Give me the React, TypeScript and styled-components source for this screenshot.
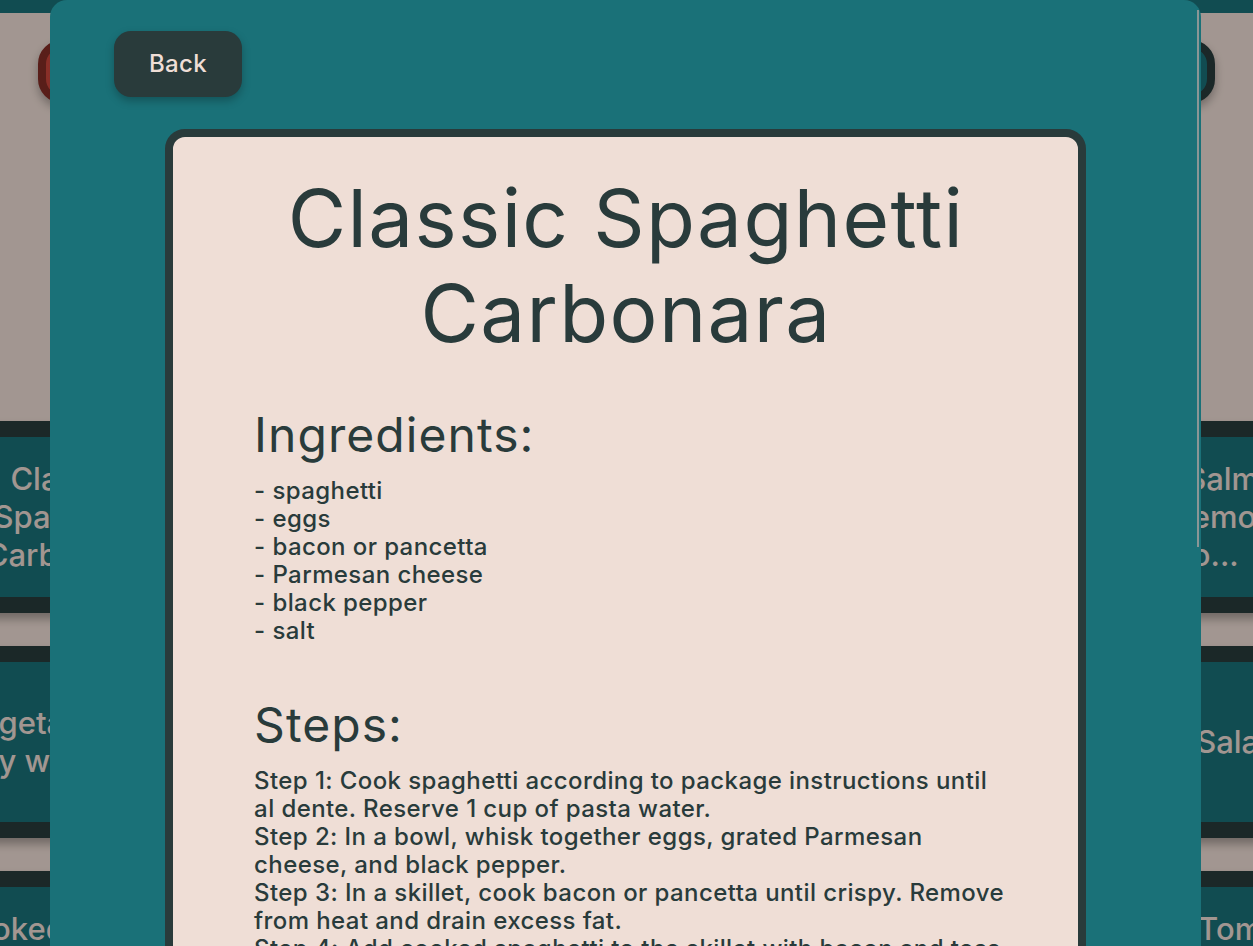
import React from "react";
import styled, { createGlobalStyle } from "styled-components";

const TEAL = "#1a7178";
const DARK = "#293b3b";
const CREAM = "#efded6";
const RED = "#cb463b";
const RED_DARK = "#842d26";

const Global = createGlobalStyle`
  * { box-sizing: border-box; }
  html, body {
    margin: 0;
    padding: 0;
    height: 100%;
    overflow: hidden;
  }
  body {
    background: ${CREAM};
    font-family: Inter, Roboto, "Liberation Sans", Arial, sans-serif;
  }
`;

/* ---------- background page ---------- */

const Page = styled.div`
  min-height: 100vh;
  background: ${CREAM};
`;

const TopStripe = styled.div`
  height: 13px;
  background: ${TEAL};
`;

const Nav = styled.nav`
  display: flex;
  justify-content: space-between;
  padding: 27px 38px 0;
`;

const NavButton = styled.button<{ $variant: "red" | "dark" }>`
  width: 130px;
  height: 63px;
  border-radius: 24px;
  border: 8px solid ${(p) => (p.$variant === "red" ? RED_DARK : DARK)};
  background: ${(p) => (p.$variant === "red" ? RED : TEAL)};
  box-shadow: 0 5px 10px rgba(0, 0, 0, 0.3);
`;

const RecipeGrid = styled.div`
  display: grid;
  grid-template-columns: 260px 1fr 260px;
  gap: 33px;
  margin: 318px -66px 0;
`;

const RecipeCard = styled.div`
  height: 192px;
  border: 16px solid ${DARK};
  border-radius: 18px;
  background: ${TEAL};
  box-shadow: 0 6px 10px rgba(0, 0, 0, 0.3);
  display: flex;
  flex-direction: column;
  align-items: center;
  justify-content: center;
  color: ${CREAM};
  font-size: 31px;
  font-weight: 500;
  line-height: 38px;
`;

const CardLine = styled.span`
  white-space: nowrap;
`;

const recipes: string[][] = [
  ["Classic", "Spaghetti", "Carbonara"],
  ["Chicken", "Tikka Masala"],
  ["Grilled Salmon", "with Lemon", "Orzo..."],
  ["Vegetable Stir", "Fry with Rice"],
  ["Beef Tacos"],
  ["Greek Salad"],
  ["Smoked Salmon", "Bagel with", "Cream Cheese"],
  ["Mushroom", "Risotto"],
  ["Roasted Tomato", "Basil Soup", "with Croutons"],
];

/* ---------- modal ---------- */

const Overlay = styled.div`
  position: fixed;
  inset: 0;
  background: rgba(0, 0, 0, 0.32);
  display: flex;
  justify-content: flex-start;
  padding-left: 50px;
`;

const ModalFrame = styled.div`
  position: relative;
  width: 1151px;
  height: 100%;
`;

const Modal = styled.div`
  height: 100%;
  overflow-y: auto;
  scrollbar-width: none;
  background: ${TEAL};
  border-radius: 17px 17px 0 0;
  padding: 31px 0 40px;
`;

const ScrollThumb = styled.div`
  position: absolute;
  top: 10px;
  right: 2px;
  width: 2px;
  height: 537px;
  background: #8a9696;
`;

const BackButton = styled.button`
  display: block;
  margin-left: 64px;
  padding: 19px 35px;
  border: none;
  border-radius: 17px;
  background: ${DARK};
  color: ${CREAM};
  font-family: inherit;
  font-size: 24px;
  font-weight: 500;
  line-height: 28px;
  letter-spacing: 0.015em;
  box-shadow: 0 4px 9px rgba(0, 0, 0, 0.25);
  cursor: pointer;
`;

const RecipeSheet = styled.article`
  width: 80%;
  margin: 32px auto 0;
  border: 8px solid ${DARK};
  border-radius: 20px;
  background: ${CREAM};
  color: ${DARK};
  padding: 33px 70px 440px 81px;
`;

const Title = styled.h1`
  margin: 0 10px 0 0;
  font-size: 80px;
  font-weight: 400;
  line-height: 95px;
  letter-spacing: 0.017em;
  text-align: center;
`;

const SectionTitle = styled.h2<{ $gap: number }>`
  margin: ${(p) => p.$gap}px 0 14px;
  font-size: 48px;
  font-weight: 400;
  line-height: 56px;
  letter-spacing: 0.022em;
`;

const TextBlock = styled.div`
  font-size: 24px;
  font-weight: 500;
  line-height: 28px;
  letter-spacing: 0.017em;
`;

const Line = styled.div``;

const ingredients = [
  "spaghetti",
  "eggs",
  "bacon or pancetta",
  "Parmesan cheese",
  "black pepper",
  "salt",
];

const steps = [
  "Cook spaghetti according to package instructions until al dente. Reserve 1 cup of pasta water.",
  "In a bowl, whisk together eggs, grated Parmesan cheese, and black pepper.",
  "In a skillet, cook bacon or pancetta until crispy. Remove from heat and drain excess fat.",
  "Add cooked spaghetti to the skillet with bacon and toss to combine. Remove from heat.",
  "Quickly pour in the egg mixture, tossing continuously to create a creamy sauce. Add pasta water as needed.",
  "Season with salt and serve immediately with extra Parmesan cheese.",
];

export default function App() {
  return (
    <>
      <Global />
      <Page>
        <TopStripe />
        <Nav>
          <NavButton $variant="red" aria-label="Add recipe" />
          <NavButton $variant="dark" aria-label="Menu" />
        </Nav>
        <RecipeGrid>
          {recipes.map((lines, i) => (
            <RecipeCard key={i}>
              {lines.map((l) => (
                <CardLine key={l}>{l}</CardLine>
              ))}
            </RecipeCard>
          ))}
        </RecipeGrid>
      </Page>
      <Overlay>
        <ModalFrame>
          <Modal>
            <BackButton>Back</BackButton>
            <RecipeSheet>
              <Title>Classic Spaghetti Carbonara</Title>
              <SectionTitle $gap={47}>Ingredients:</SectionTitle>
              <TextBlock>
                {ingredients.map((ing) => (
                  <Line key={ing}>- {ing}</Line>
                ))}
              </TextBlock>
              <SectionTitle $gap={52}>Steps:</SectionTitle>
              <TextBlock>
                {steps.map((s, i) => (
                  <Line key={i}>
                    Step {i + 1}: {s}
                  </Line>
                ))}
              </TextBlock>
            </RecipeSheet>
          </Modal>
          <ScrollThumb />
        </ModalFrame>
      </Overlay>
    </>
  );
}
